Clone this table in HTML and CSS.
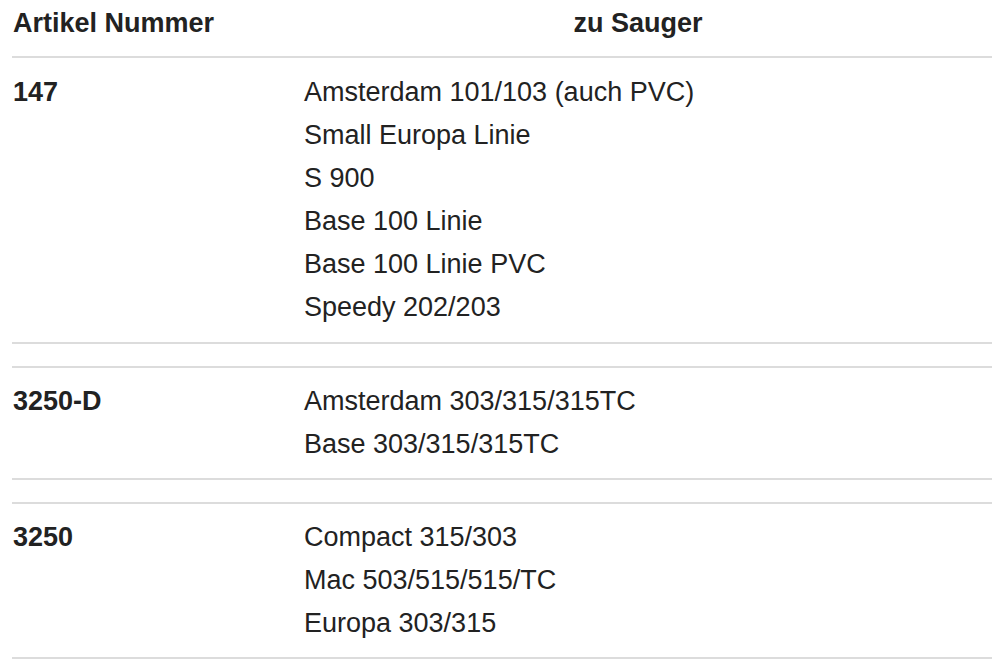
FILE: index.html
```html
<!DOCTYPE html>
<html lang="de">
<head>
<meta charset="utf-8">
<title>Artikel Nummer</title>
<link rel="stylesheet" href="styles.css">
</head>
<body>
<div class="table">
  <div class="row head">
    <div class="col-a">Artikel Nummer</div>
    <div class="col-b">zu Sauger</div>
  </div>
  <div class="row group first">
    <div class="col-a">147</div>
    <div class="col-b">
      <div>Amsterdam 101/103 (auch PVC)</div>
      <div>Small Europa Linie</div>
      <div>S 900</div>
      <div>Base 100 Linie</div>
      <div>Base 100 Linie PVC</div>
      <div>Speedy 202/203</div>
    </div>
  </div>
  <div class="row group">
    <div class="col-a">3250-D</div>
    <div class="col-b">
      <div>Amsterdam 303/315/315TC</div>
      <div>Base 303/315/315TC</div>
    </div>
  </div>
  <div class="row group">
    <div class="col-a">3250</div>
    <div class="col-b">
      <div>Compact 315/303</div>
      <div>Mac 503/515/515/TC</div>
      <div>Europa 303/315</div>
    </div>
  </div>
</div>
</body>
</html>
```
FILE: styles.css
```css
html, body {
  margin: 0;
  padding: 0;
  background: #ffffff;
}
body {
  font-family: "Liberation Sans", Arial, Helvetica, sans-serif;
  font-size: 27px;
  line-height: 43px;
  color: #222222;
}
.table {
  width: 980px;
  margin-left: 12px;
  display: flex;
  flex-direction: column;
}
.row {
  display: grid;
  grid-template-columns: 292px 1fr;
}
.col-a {
  padding-left: 1px;
  font-weight: bold;
}
.head {
  font-weight: bold;
  padding: 2px 0 11px;
  border-bottom: 2px solid #dcdcdc;
}
.head .col-b {
  text-align: center;
  padding-right: 20px;
}
.group {
  padding: 12px 0 12px;
  border-bottom: 2px solid #dcdcdc;
  border-top: 2px solid #dcdcdc;
  margin-top: 22px;
}
.group.first {
  border-top: none;
  margin-top: 0;
  padding-top: 13px;
  padding-bottom: 13px;
}
```
